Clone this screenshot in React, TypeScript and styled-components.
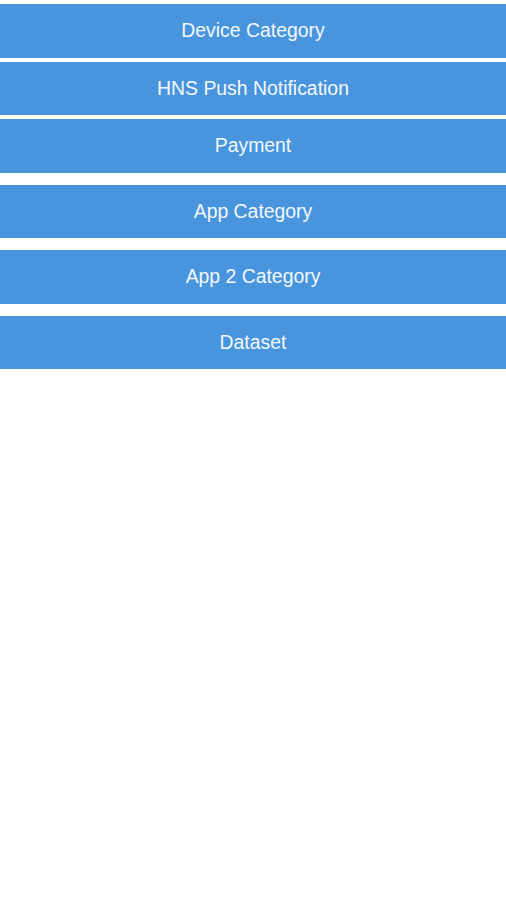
import React from 'react'
import styled, { createGlobalStyle } from 'styled-components'

const GlobalStyle = createGlobalStyle`
  html, body {
    margin: 0;
    padding: 0;
    background: #ffffff;
  }
  body {
    font-family: 'Liberation Sans', Arial, Helvetica, sans-serif;
  }
`

const menuGroups = [
  ['Device Category', 'HNS Push Notification', 'Payment'],
  ['App Category', 'App 2 Category', 'Dataset'],
]

export default function App() {
  return (
    <>
      <GlobalStyle />
      <Page>
        {menuGroups.map((group, i) => (
          <Group key={i} $gap={i === 0 ? 4 : 12}>
            {group.map(label => (
              <MenuButton key={label} type='button'>
                {label}
              </MenuButton>
            ))}
          </Group>
        ))}
      </Page>
    </>
  )
}

const Page = styled.div`
  display: flex;
  flex-direction: column;
  gap: 12px;
  padding-top: 4px;
  width: 506px;
  min-height: 900px;
  box-sizing: border-box;
`

const Group = styled.div<{ $gap: number }>`
  display: flex;
  flex-direction: column;
  gap: ${p => p.$gap}px;
`

const MenuButton = styled.button`
  display: flex;
  align-items: center;
  justify-content: center;
  width: 100%;
  height: 53.5px;
  margin: 0;
  padding: 0;
  border: none;
  background: #4894dd;
  color: #f4f8fd;
  font-family: 'Liberation Sans', Arial, Helvetica, sans-serif;
  font-size: 19.4px;
  cursor: pointer;
`
